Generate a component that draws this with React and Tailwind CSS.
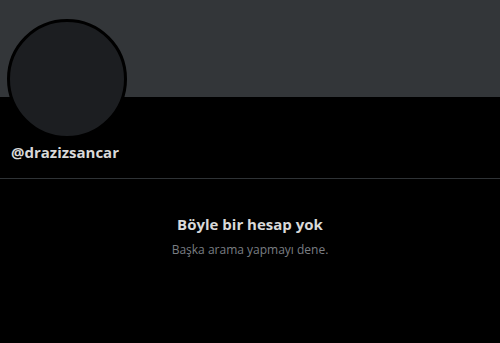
export default function App() {
  return (
    <div className="w-[500px] h-[343px] bg-black overflow-hidden" style={{ fontFamily: '"Open Sans", "Liberation Sans", sans-serif' }}>
      <div className="h-[97px] bg-[#333639]" />
      <div className="relative px-[11px] h-[82px] border-b border-[#2f3336]">
        <div className="absolute left-[7px] top-[-78px] w-[120px] h-[120px] rounded-full bg-[#1c1e21] border-[3px] border-black" />
        <div className="pt-[45px] text-[15px] font-bold text-[#d9d9d9] leading-5">@drazizsancar</div>
      </div>
      <div className="flex flex-col items-center pt-[35px]">
        <div className="text-[15px] font-bold text-[#d9d9d9] leading-5">Böyle bir hesap yok</div>
        <div className="mt-[8px] text-[12px] text-[#7a7e83] leading-4">Başka arama yapmayı dene.</div>
      </div>
    </div>
  );
}
